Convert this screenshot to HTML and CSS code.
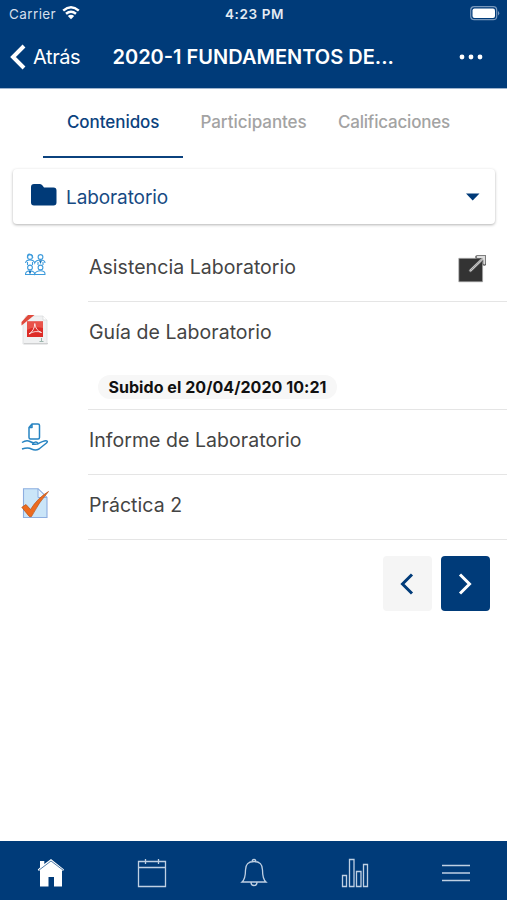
FILE: index.html
```html
<!DOCTYPE html>
<html lang="es">
	<head>
		<meta charset="UTF-8">
		<title>Fundamentos</title>
		<link rel="stylesheet" href="styles.css">
	</head>

	<body>
		<div class="app">
			<header class="header">
				<div class="status">
					<div class="carrier">
						<span>Carrier</span>
						<svg class="wifi" width="18" height="14" viewBox="0 0 18 14">
							<path d="M1.2 4.6Q9-2 16.8 4.6M4 7.8Q9 3.6 14 7.8" fill="none" stroke="#fff" stroke-width="2.5"/>
							<path d="M5.8 9.9Q9 7.4 12.2 9.9L9 13.3Z" fill="#fff"/>
						</svg>
					</div>
					<span class="clock">4:23 PM</span>
					<svg class="battery" width="30" height="15" viewBox="0 0 30 15">
						<rect x=".7" y=".7" width="26" height="13" rx="3.5" fill="none" stroke="#7898bc" stroke-width="1.2"/>
						<rect x="2.5" y="2.5" width="22.5" height="9.5" rx="2" fill="#fff"/>
						<path d="M28 5Q30.5 7.2 28 9.5Z" fill="#7898bc"/>
					</svg>
				</div>
				<div class="navbar">
					<a class="back">
						<svg width="16" height="26" viewBox="0 0 16 26"><path d="M14 2L3 13L14 24" fill="none" stroke="#fff" stroke-width="4"/></svg>
						<span>Atrás</span>
					</a>
					<h1 class="title">2020-1 FUNDAMENTOS DE...</h1>
					<svg class="more" width="24" height="6" viewBox="0 0 24 6" fill="#fff">
						<circle cx="3" cy="3" r="2.4"/><circle cx="12" cy="3" r="2.4"/><circle cx="21" cy="3" r="2.4"/>
					</svg>
				</div>
			</header>

			<nav class="tabs">
				<a class="tab current">Contenidos</a>
				<a class="tab">Participantes</a>
				<a class="tab">Calificaciones</a>
			</nav>

			<div class="select">
				<svg class="folder" width="26" height="22" viewBox="0 0 26 22"><path d="M0 3Q0 0 3 0H9Q10.5 0 11.5 1.5L13 3.5H22.5Q25.5 3.5 25.5 6.5V18.5Q25.5 21.5 22.5 21.5H3Q0 21.5 0 18.5Z" fill="#003a78"/></svg>
				<span class="select-text">Laboratorio</span>
				<svg width="14" height="8" viewBox="0 0 14 8"><path d="M0 .5H13.5L6.7 7.5Z" fill="#003a78"/></svg>
			</div>

			<ul class="list">
				<li class="item">
					<!-- asistencia -->
					<svg class="icon" width="28" height="30" viewBox="0 0 28 30" fill="none" stroke="#3d9bdc" stroke-width="1.1">
						<circle cx="9" cy="7" r="2.4"/>
						<circle cx="19.5" cy="7" r="2.4"/>
						<circle cx="9" cy="17.5" r="2.4"/>
						<circle cx="19.5" cy="17.5" r="2.4"/>
						<path d="M4.5 13Q5 10 9 10T13.7 13Q15 10 19.5 10T24 13M4.5 24Q5 20.8 9 20.8T13.7 24Q15 20.8 19.5 20.8T24 24M4 24.5H24.5M6.5 8Q6 3.6 9 4.2T11.7 8M6.5 12V15M11.5 12V15M17 12V15M22 12V15"/>
						<path d="M18 10.5H21L19.5 14ZM7.5 21H10.5L9 24.5Z" fill="#1673b8" stroke="none"/>
					</svg>
					<span class="name">Asistencia Laboratorio</span>
					<svg class="external" width="28" height="28" viewBox="0 0 28 28">
						<path d="M.8 3.3H24.6V26.8H.8Z" fill="#333" stroke="#aaa" stroke-width=".7"/>
						<path d="M12.5 15.5L25 3.5M19 2H26.3V9" fill="none" stroke="#555" stroke-width="3.6" stroke-linecap="round"/>
						<path d="M12.5 15.5L25 3.5M19.5 2H26.3V8.5" fill="none" stroke="#ddd" stroke-width="2" stroke-linecap="round"/>
						<path d="M12.5 15.5L25 3.5" stroke="#777" stroke-width=".7"/>
					</svg>
				</li>
				<li class="item item-file">
					<div class="row">
						<!-- pdf -->
						<svg class="icon" width="28" height="30" viewBox="0 0 28 30">
							<path d="M5 1H22L26 5V29H2V7Z" fill="#f0f1f2" stroke="#dcdedf" stroke-width=".8"/>
							<path d="M22 1V5H26" fill="#fff" stroke="#d5d7d8" stroke-width=".7"/>
							<path d="M7 0H13.5L.5 10.5V7Z" fill="#e04a3d"/>
							<path d="M6 6.5H22V22H6Z" fill="#dd2c27"/>
							<path d="M6 6.5H22V13Q12 11 6 15Z" fill="#e9534a"/>
							<path d="M8 19Q13.5 15.5 13.8 8.5Q14.5 15.5 20.5 17.5Q14 15 8 19Z" fill="none" stroke="#fff" stroke-width=".8"/>
							<path d="M20.5 23V27M18.5 26.5H22.5" stroke="#9bb5ac" stroke-width="1"/>
							<path d="M3 28.7H27" stroke="#c9cbcc"/>
						</svg>
						<span class="name">Guía de Laboratorio</span>
					</div>
					<span class="date">Subido el 20/04/2020 10:21</span>
				</li>
				<li class="item">
					<!-- entrega -->
					<svg class="icon" width="28" height="30" viewBox="0 0 28 30" fill="none" stroke="#2784c2" stroke-width="1.5" stroke-linejoin="round">
						<path d="M11 1H17Q18.5 1 18.5 2.5V14.5Q18.5 16 17 16H9.5Q8 16 8 14.5V4.5ZM11 1V4.5H8"/>
						<path d="M1 19.5Q5.5 16.5 9 18.5T14.5 19Q17 19.2 16.5 20.5Q16 21.5 11 21.3M16.5 21Q22 18 25 17.8Q27.5 18 25.5 20L18 26Q14.5 28 10.5 26Q7 24 1 26"/>
					</svg>
					<span class="name">Informe de Laboratorio</span>
				</li>
				<li class="item">
					<!-- cuestionario -->
					<svg class="icon" width="28" height="30" viewBox="0 0 28 30">
						<path d="M2.5 .8H17L26 9.5V29.5H2.5Z" fill="#cae5f8" stroke="#8daee0" stroke-width="1.1"/>
						<path d="M17 .8V9.5H26Z" fill="#e9f5fd" stroke="#8daee0" stroke-width="1"/>
						<path d="M.8 19.3L5 16.5L9.5 21.5Q16.5 10 27.5 3.5Q18 14 10.5 28.5Q9 29 8 28.2Z" fill="#ed6b1e" stroke="#b95014" stroke-width=".7"/>
					</svg>
					<span class="name">Práctica 2</span>
				</li>
			</ul>

			<div class="pager">
				<button class="btn"><svg width="14" height="22" viewBox="0 0 14 22"><path d="M12 1.5L2.5 11L12 20.5"/></svg></button>
				<button class="btn btn-next"><svg width="14" height="22" viewBox="0 0 14 22"><path d="M2 1.5L11.5 11L2 20.5"/></svg></button>
			</div>

			<footer class="footer">
				<a class="link"><svg width="28" height="30" viewBox="0 0 28 30">
					<path d="M3 9V3H7.3V6L14 1L27 11.5L26 13L25 12.2V28.5H17V19H11.5V28.5H3V12.2L1.5 13L.8 11.5L3 9.5Z" fill="#fff"/>
					<path d="M1.5 12.5L14 3L26.5 12.5" fill="none" stroke="#527daa" stroke-width="1"/>
				</svg></a>
				<a class="link"><svg width="30" height="30" viewBox="0 0 30 30"><path d="M1.5 3.5H28.5V28.5H1.5ZM1.5 9.5H28.5M8.5 1V6M21.5 1V6"/></svg></a>
				<a class="link"><svg width="28" height="30" viewBox="0 0 28 30"><path d="M12.2 3.5Q12.2 1.3 14 1.3T15.8 3.5M2 24H26Q22.5 21 22.5 12Q22.5 3.5 14 3.5T5.5 12Q5.5 21 2 24ZM11 24.5Q11 27.5 14 27.5T17 24.5"/></svg></a>
				<a class="link"><svg width="28" height="30" viewBox="0 0 28 30"><path d="M1.5 17.5H5.5V28.5H1.5ZM8.5 1.5H13V28.5H8.5ZM15.5 13.5H20V28.5H15.5ZM22.5 6.5H26.5V28.5H22.5Z"/></svg></a>
				<a class="link"><svg width="28" height="30" viewBox="0 0 28 30"><path d="M0 7.5H28M0 15H28M0 22.5H28"/></svg></a>
			</footer>
		</div>
	</body>
</html>
```
FILE: styles.css
```css
*{
	margin: 0px;
	padding: 0px;
	box-sizing: border-box;
}

ul{
	list-style: none;
}

svg{
	display: block;
	flex: none;
}

body{
	background: #ffffff;
	font-family: Inter, "Liberation Sans", sans-serif;
}

.app{ /*整体容器*/
	display: flex;
	flex-direction: column;
	height: 900px;
	overflow: hidden;
}

.header{
	height: 89px;
	background: #003b79;
	border-bottom: 1px solid #9eb4ce;
	color: #ffffff;
}

.status{
	display: grid;
	grid-template-columns: 1fr auto 1fr;
	align-items: center;
	height: 28px;
	padding: 0 7px 0 9px;
	font-size: 13.5px;
}

.carrier{
	display: flex;
	align-items: center;
	gap: 6px;
	color: #d5dfeb;
	letter-spacing: 0.4px;
}

.wifi,
.battery{
	margin-bottom: 2px;
}

.clock{
	font-weight: 600;
	font-size: 13.5px;
	letter-spacing: 0.6px;
	color: #e4ebf3;
}

.battery{
	justify-self: end;
}

.navbar{
	display: flex;
	align-items: center;
	height: 58px;
	padding: 0 24px 0 10px;
}

.back{
	display: flex;
	align-items: center;
	gap: 7px;
	width: 102.5px;
	font-size: 20px;
	letter-spacing: -0.4px;
}

.title{
	flex: 1;
	font-size: 20px;
	font-weight: 600;
	white-space: nowrap;
}

.tabs{
	display: flex;
	height: 69px;
	padding-left: 43px;
	font-size: 17px;
	font-weight: 500;
	color: #a3a3a3;
}

.tab{
	width: 140.4px;
	line-height: 67px;
	text-align: center;
	letter-spacing: -0.05px;
}

.tab.current{ /*选中标签*/
	color: #0b427e;
	border-bottom: 2px solid #0b427e;
}

.tab:last-child{
	letter-spacing: -0.2px;
}

.select{
	display: flex;
	align-items: center;
	height: 55px;
	margin: 11px 12px 0 13px;
	padding: 1px 15px 0 18px;
	border-radius: 4px;
	box-shadow: 0 1px 3px rgba(0,0,0,0.3);
	font-size: 19px;
	color: #174a83;
}

.folder{
	margin-bottom: 4px;
}

.select-text{
	flex: 1;
	margin-left: 9px;
	letter-spacing: -0.1px;
}

.list{
	margin-top: 12px;
}

.item,
.row{
	display: flex;
	align-items: center;
	height: 65px;
}

.item{
	position: relative;
	padding: 0 0 3px 21px;
}

.item::after{ /*分隔线*/
	content: "";
	position: absolute;
	left: 88px;
	right: 0;
	bottom: -1px;
	height: 1px;
	background: #e5e5e5;
}

.item-file{
	display: block;
	height: 108px;
}

.row{
	height: 62px;
}

.icon{
	margin-bottom: 4px;
}

.name{
	flex: 1;
	margin-left: 40px;
	font-size: 19.5px;
	letter-spacing: 0.05px;
	color: #444444;
}

.external{
	margin: 3px 21px 0 0;
}

.date{
	display: block;
	width: 239px;
	height: 24px;
	margin: 12px 0 0 77px;
	border-radius: 12px;
	background: #f7f7f7;
	font-size: 16px;
	font-weight: 700;
	line-height: 24px;
	text-align: center;
	white-space: nowrap;
	letter-spacing: 0.06px;
	color: #111111;
}

.pager{
	display: flex;
	justify-content: flex-end;
	gap: 9px;
	margin: 17px 17px 0 0;
}

.btn{
	display: flex;
	align-items: center;
	justify-content: center;
	width: 49px;
	height: 55px;
	padding-right: 1px;
	border: none;
	border-radius: 4px;
	background: #f5f5f5;
	fill: none;
	stroke: #003b79;
	stroke-width: 3px;
}

.btn-next{
	background: #003b79;
	stroke: #ffffff;
}

.footer{ /*底部导航*/
	display: flex;
	height: 59px;
	margin-top: auto;
	background: #003b79;
}

.link{
	display: flex;
	flex: 1;
	align-items: center;
	justify-content: center;
	padding-top: 4px;
	fill: none;
	stroke: #bfd0e3;
	stroke-width: 1.3px;
}

.link:first-child{
	stroke: none;
}
```
